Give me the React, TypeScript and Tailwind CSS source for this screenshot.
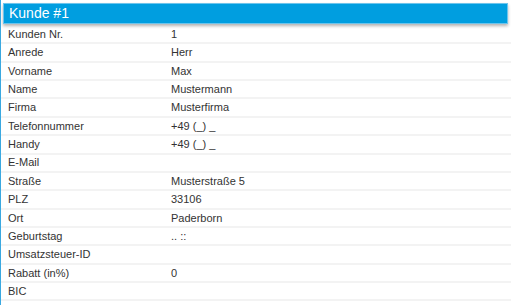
import React from 'react';

const rows: [string, string][] = [
  ['Kunden Nr.', '1'],
  ['Anrede', 'Herr'],
  ['Vorname', 'Max'],
  ['Name', 'Mustermann'],
  ['Firma', 'Musterfirma'],
  ['Telefonnummer', '+49 (_) _'],
  ['Handy', '+49 (_) _'],
  ['E-Mail', ''],
  ['Straße', 'Musterstraße 5'],
  ['PLZ', '33106'],
  ['Ort', 'Paderborn'],
  ['Geburtstag', '.. ::'],
  ['Umsatzsteuer-ID', ''],
  ['Rabatt (in%)', '0'],
  ['BIC', ''],
];

export default function App() {
  return (
    <div className="w-[511px] h-[305px] overflow-hidden bg-white border-l border-[#3aa8e0] font-['Liberation_Sans',Arial,sans-serif]">
      <div className="pt-[3px] pl-[2px] pr-[3px]">
        <div className="h-[21px] bg-[#009ee0] border border-[#6cc4ec] shadow-[0_2px_3px_rgba(0,0,0,0.3)] flex items-center pl-[5px] text-white text-[14px]">
          Kunde #1
        </div>
      </div>
      <div className="mt-[2px]">
        {rows.map(([label, value]) => (
          <div
            key={label}
            className="h-[18.36px] flex items-center border-b-2 border-[#f3f3f3] text-[11px] text-[#333]"
          >
            <div className="w-[170px] pl-[7px]">{label}</div>
            <div>{value}</div>
          </div>
        ))}
      </div>
    </div>
  );
}
